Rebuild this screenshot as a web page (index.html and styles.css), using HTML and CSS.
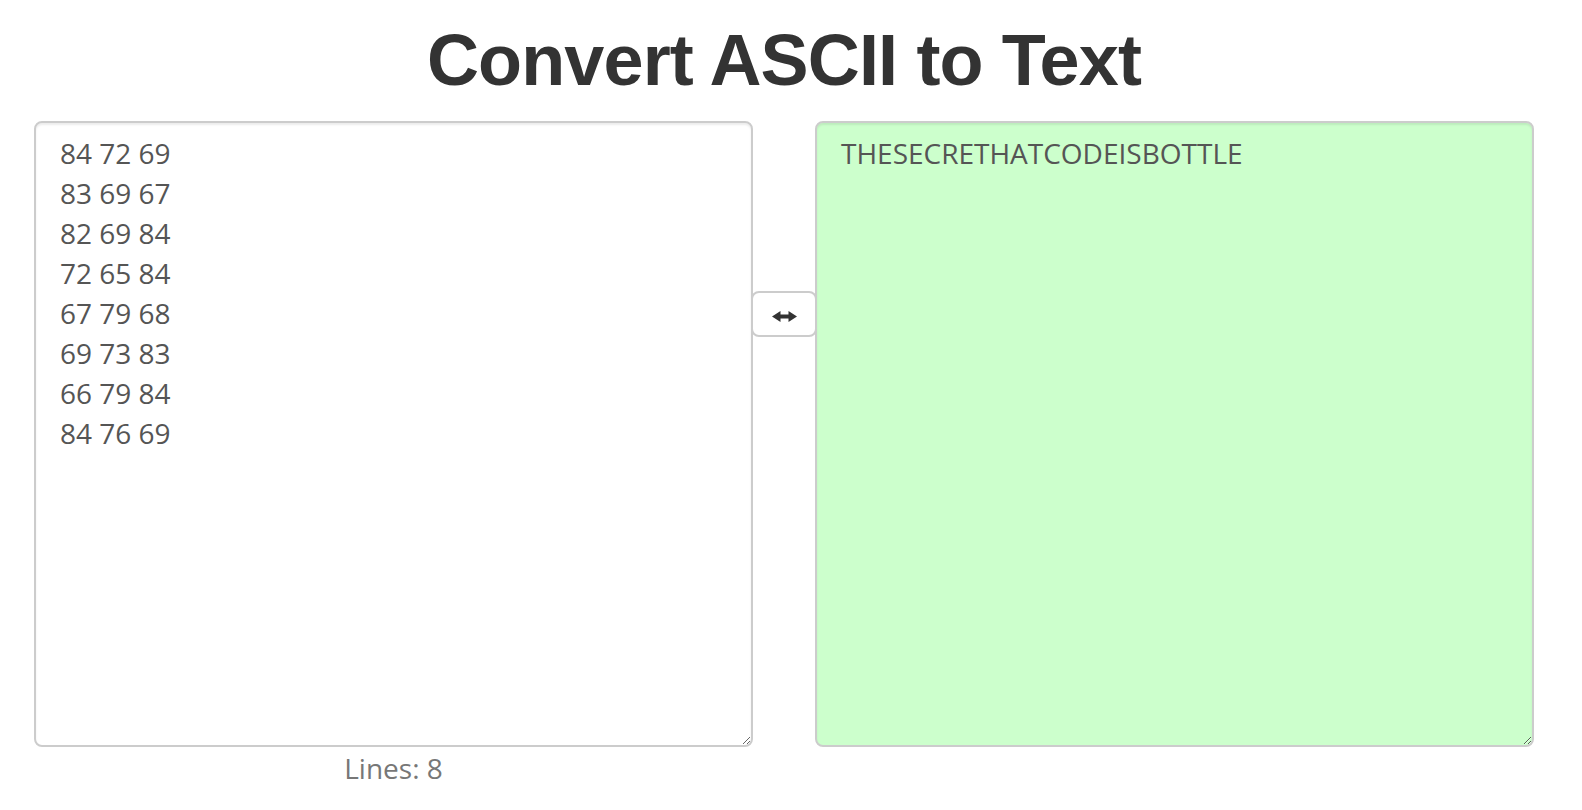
FILE: index.html
```html
<!DOCTYPE html>
<html>
<head>
<meta charset="utf-8">
<title>Convert ASCII to Text</title>
<link rel="stylesheet" href="styles.css">
</head>
<body>
<div class="page">
  <h1 class="title">Convert ASCII to Text</h1>
  <div class="converter">
    <div class="pane">
      <textarea class="box box-input" spellcheck="false">84 72 69
83 69 67
82 69 84
72 65 84
67 79 68
69 73 83
66 79 84
84 76 69</textarea>
      <div class="lines">Lines: 8</div>
    </div>
    <div class="middle">
      <button class="swap" type="button" aria-label="Swap">
        <svg class="swap-icon" width="25" height="11" viewBox="0 0 25 11"><path d="M0 5.5 L8.5 0 V3.5 H16.5 V0 L25 5.5 L16.5 11 V7.5 H8.5 V11 Z" fill="#333"/></svg>
      </button>
    </div>
    <div class="pane">
      <textarea class="box box-output" spellcheck="false">THESECRETHATCODEISBOTTLE</textarea>
    </div>
  </div>
</div>
</body>
</html>
```

FILE: styles.css
```css
html, body {
  margin: 0;
  padding: 0;
  background: #fff;
}
body {
  font-family: "Open Sans", "Liberation Sans", sans-serif;
  color: #333;
}
.page {
  width: 1500px;
  margin-left: 34px;
}
.title {
  margin: 21px 0 21px;
  font-family: "Liberation Sans", Arial, sans-serif;
  font-weight: 700;
  font-size: 72px;
  line-height: 79px;
  letter-spacing: -0.85px;
  text-align: center;
  color: #333;
}
.converter {
  display: flex;
}
.pane {
  width: 719px;
  display: flex;
  flex-direction: column;
}
.box {
  box-sizing: border-box;
  width: 719px;
  height: 626px;
  margin: 0;
  padding: 10px 24px 12px;
  border: 2px solid #ccc;
  border-radius: 8px;
  box-shadow: inset 0 2px 2px rgba(0, 0, 0, 0.075);
  font-family: "Open Sans", sans-serif;
  font-size: 28px;
  line-height: 40px;
  color: #555;
  background: #fff;
  resize: both;
  overflow: auto;
  outline: none;
  display: block;
}
.box-output {
  background: #ccffcc;
}
.lines {
  margin-top: 1px;
  text-align: center;
  font-size: 28px;
  line-height: 40px;
  color: #777;
}
.middle {
  width: 62px;
  display: flex;
  justify-content: center;
  position: relative;
  z-index: 1;
}
.swap {
  box-sizing: border-box;
  width: 66px;
  height: 46px;
  margin: 170px -2px 0;
  padding: 4px 0 0;
  border: 2px solid #ccc;
  border-radius: 8px;
  background: #fff;
  display: flex;
  align-items: center;
  justify-content: center;
  flex-shrink: 0;
}
.swap-icon {
  display: block;
}
```
